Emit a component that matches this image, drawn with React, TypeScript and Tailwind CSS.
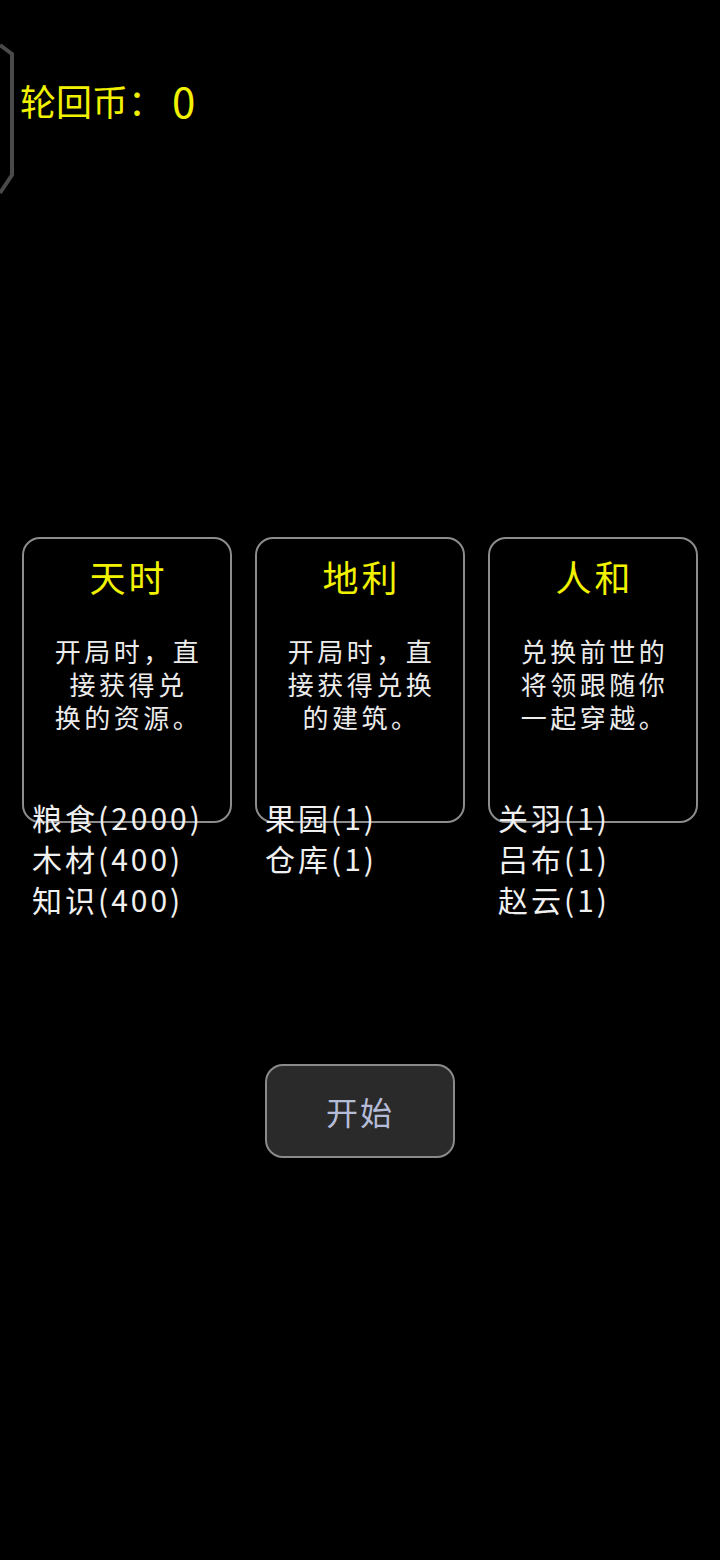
const cards = [
  {
    title: "天时",
    desc: ["开局时，直", "接获得兑", "换的资源。"],
    items: ["粮食(2000)", "木材(400)", "知识(400)"],
  },
  {
    title: "地利",
    desc: ["开局时，直", "接获得兑换", "的建筑。"],
    items: ["果园(1)", "仓库(1)"],
  },
  {
    title: "人和",
    desc: ["兑换前世的", "将领跟随你", "一起穿越。"],
    items: ["关羽(1)", "吕布(1)", "赵云(1)"],
  },
];

export default function App() {
  return (
    <div
      className="relative min-h-[1560px] bg-black"
      style={{ fontFamily: '"Noto Sans CJK SC", "Noto Sans", sans-serif' }}
    >
      {/* 左侧半露的六边形边框 */}
      <svg className="absolute left-0 top-[42px]" width="18" height="156" viewBox="0 0 18 156">
        <path d="M0 3 L12 12 L12 133 L0 151" fill="none" stroke="#4a4a4a" strokeWidth="4" />
      </svg>

      <div className="flex items-center pl-[20px] pt-[76px] text-[36px] leading-[48px] text-[#f2f200]">
        <span>轮回币：</span>
        <span className="ml-[8px] text-[42px]">0</span>
      </div>

      <div className="mt-[413px] flex items-start gap-[23px] px-[22px]">
        {cards.map((c) => (
          <div key={c.title} className="flex w-[210px] flex-col">
            <div className="flex h-[286px] flex-col items-center rounded-[18px] border-2 border-[#8c8c8c] pt-[17px]">
              <div className="pl-[3px] text-[36px] leading-[40px] tracking-[3px] text-[#f2f200]">
                {c.title}
              </div>
              <div className="mt-[38px] pl-[3px] text-center text-[26px] leading-[33px] tracking-[3.5px] text-[#ececec]">
                {c.desc.map((line) => (
                  <div key={line}>{line}</div>
                ))}
              </div>
            </div>
            <div className="-mt-[26px] pl-[10px] text-[30px] leading-[41px] tracking-[3px] text-[#f0f0f0]">
              {c.items.map((it) => (
                <div key={it}>{it}</div>
              ))}
            </div>
          </div>
        ))}
      </div>

      <div className="mt-[144px] flex justify-center">
        <button className="h-[94px] w-[190px] rounded-[18px] border-2 border-[#8a8a8a] bg-[#2a2a2a] text-[32px] tracking-[2px] text-[#b4bcd8]">
          开始
        </button>
      </div>
    </div>
  );
}
